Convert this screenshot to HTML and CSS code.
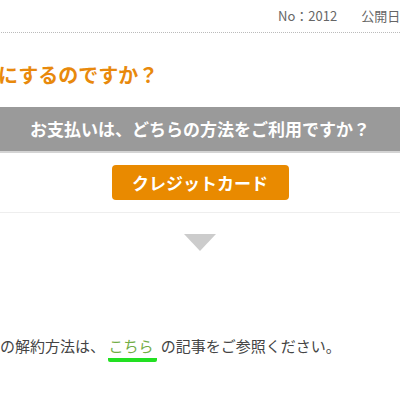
FILE: index.html
```html
<!doctype html>
<html>
<head>
<meta charset="utf-8">
<title>お支払い方法</title>
<link rel="stylesheet" href="styles.css">
</head>
<body>
	<div id="page">
		<div class="meta">
			<span>No：2012</span>
			<span>公開日：2020年10月16日</span>
		</div>
		<h2 class="ttl">支払い方法は何にするのですか？</h2>
		<div class="ask">お支払いは、どちらの方法をご利用ですか？</div>
		<div class="choice">
			<a class="btn" href="#">クレジットカード</a>
		</div>
		<div class="arrow"></div>
		<p class="note">クレジットカード決済の解約方法は、 <a class="link" href="#">こちら</a> の記事をご参照ください。</p>
	</div>
</body>
</html>
```

FILE: styles.css
```css
body{
	margin:0;
	background:#fff;
	overflow:hidden;
	font-family:"Noto Sans CJK JP","Noto Sans",sans-serif;
	color:#444;
}
#page{
	width:700px;
	margin-left:-150px;
}
.meta{
	display:flex;
	gap:24px;
	height:32px;
	line-height:32px;
	padding-left:428px;
	font-size:13px;
	color:#666;
	border-bottom:1px dotted #bbb;
}
.ttl{
	margin:27px 0 17px 0;
	padding-left:8px;
	font-size:20px;
	line-height:30px;
	font-weight:700;
	color:#e8890c;
	white-space:nowrap;
}
.ask{
	height:44px;
	line-height:44px;
	background:#9a9a9a;
	border-bottom:2px solid #d4d4d4;
	color:#fff;
	font-size:17px;
	font-weight:700;
	text-align:center;
}
.choice{
	display:flex;
	justify-content:center;
	padding:12px 0;
	border-bottom:1px solid #eee;
}
.btn{
	display:block;
	width:177px;
	height:35px;
	line-height:35px;
	text-align:center;
	background:#e98a00;
	border-radius:4px;
	color:#fff;
	font-size:17px;
	font-weight:700;
	text-decoration:none;
}
.arrow{
	width:0;
	height:0;
	margin:21px auto 0 auto;
	border-left:16px solid transparent;
	border-right:16px solid transparent;
	border-top:17px solid #ccc;
}
.note{
	margin:83px 0 0 0;
	font-size:15px;
	line-height:24px;
	white-space:nowrap;
}
.link{
	display:inline-block;
	padding-right:4px;
	color:#72ad45;
	text-decoration:none;
	border-bottom:4px solid #22e022;
	border-radius:2px;
}
```
